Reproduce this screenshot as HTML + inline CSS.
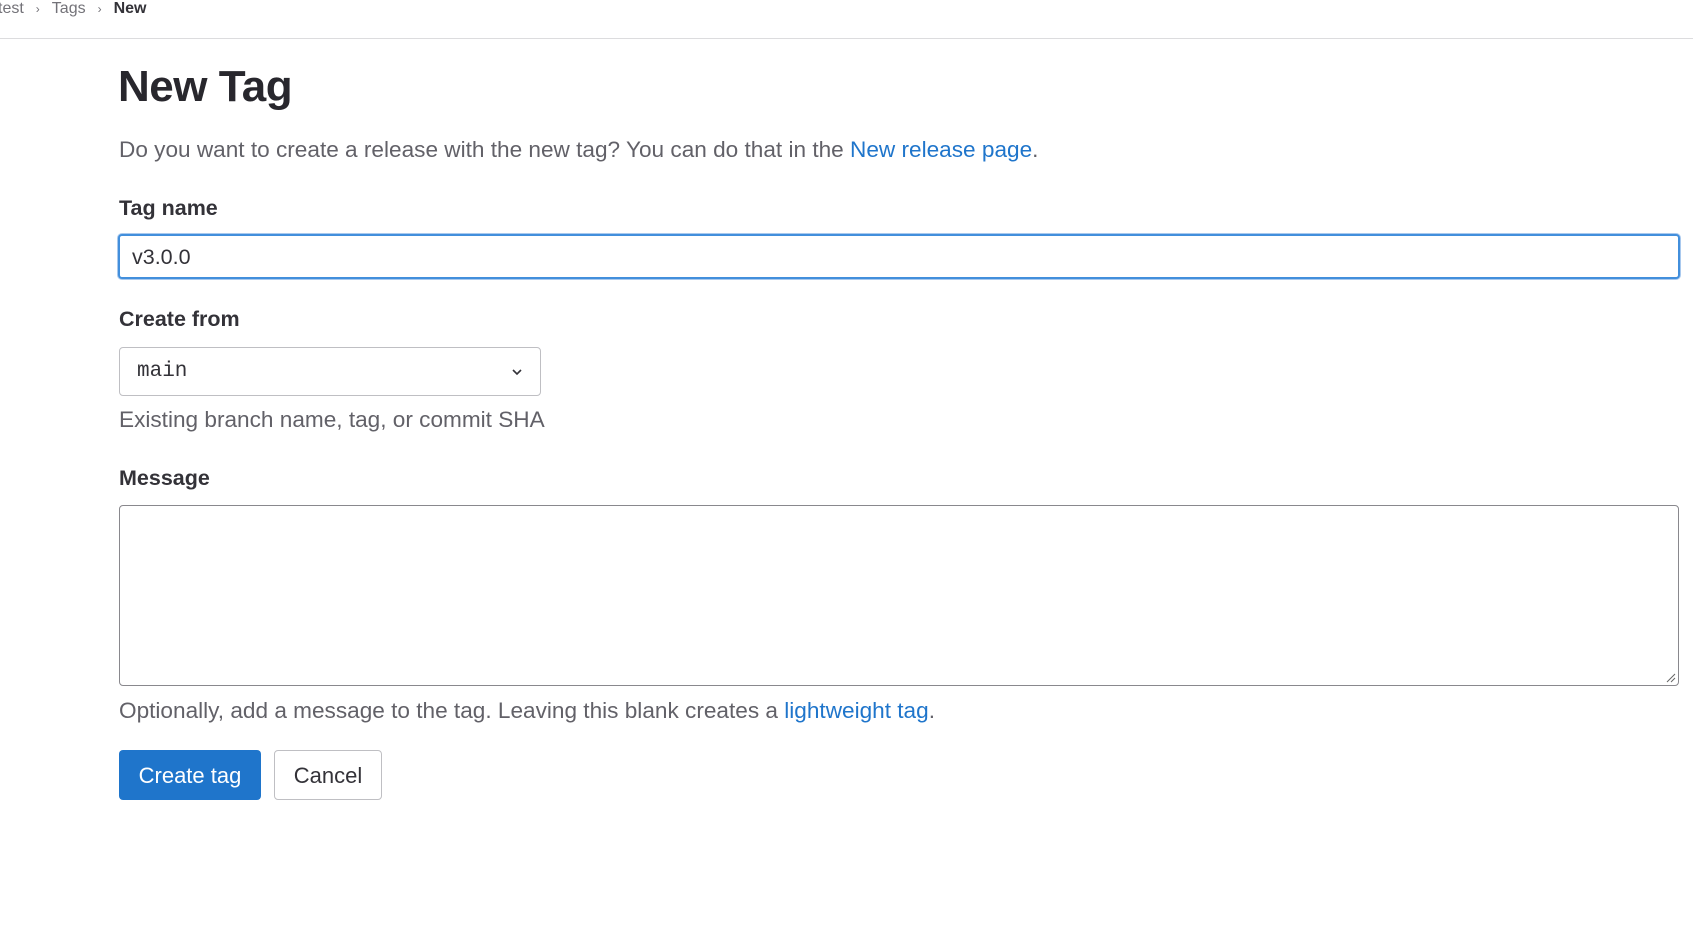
<!DOCTYPE html>
<html><head><style>
*{box-sizing:border-box;margin:0;padding:0}
body{width:1693px;height:942px;background:#fff;font-family:"Liberation Sans",sans-serif;color:#333238;position:relative;overflow:hidden}
.a{position:absolute;white-space:nowrap}
.bc{top:0;left:-2px;font-size:16px;color:#737278;line-height:18px}
.bc b{color:#333238}
.bc span{margin:0 12px;font-size:12px}
.line{position:absolute;left:0;top:38px;width:1693px;height:1px;background:#dcdcde}
h1{position:absolute;left:118px;top:62px;font-size:44px;font-weight:bold;color:#28272d;letter-spacing:-0.5px}
.t{font-size:22.6px;color:#626168;left:119px}
a{color:#1f75cb;text-decoration:none}
.lbl{font-size:21.5px;font-weight:bold;color:#333238;left:119px}
.box{position:absolute;border:1px solid #89888d;border-radius:4px;background:#fff}
.btn{position:absolute;border-radius:4px;font-size:22px;display:flex;align-items:center;justify-content:center}
</style></head><body>
<div class="a bc">test<span>›</span>Tags<span>›</span><b>New</b></div>
<div class="line"></div>
<h1>New Tag</h1>
<div class="a t" style="top:137px">Do you want to create a release with the new tag? You can do that in the <a>New release page</a>.</div>
<div class="a lbl" style="top:196px">Tag name</div>
<div class="box" style="left:118px;top:234px;width:1562px;height:45px;border:2px solid #428fdc;box-shadow:0 0 0 1px #a9c9ee"></div>
<div class="a" style="left:132px;top:245px;font-size:21.5px;color:#333238">v3.0.0</div>
<div class="a lbl" style="top:307px">Create from</div>
<div class="box" style="left:119px;top:347px;width:422px;height:49px;border-color:#bfbfc3"></div>
<div class="a" style="left:137px;top:360px;font-size:21px;font-family:'Liberation Mono',monospace;color:#333238">main</div>
<svg class="a" style="left:510px;top:365px" width="14" height="14" viewBox="0 0 14 14"><path d="M3 5l4 4 4-4" fill="none" stroke="#333238" stroke-width="1.6"/></svg>
<div class="a t" style="top:407px">Existing branch name, tag, or commit SHA</div>
<div class="a lbl" style="top:466px">Message</div>
<div class="box" style="left:119px;top:505px;width:1560px;height:181px"></div>
<svg class="a" style="left:1664px;top:671px" width="12" height="12"><path d="M11 3L3 11M11 7L7 11" stroke="#666" stroke-width="1"/></svg>
<div class="a t" style="top:698px">Optionally, add a message to the tag. Leaving this blank creates a <a>lightweight tag</a>.</div>
<div class="btn" style="left:119px;top:750px;width:142px;height:50px;background:#1f75cb;color:#fff;padding-top:2px">Create tag</div>
<div class="btn" style="left:274px;top:750px;width:108px;height:50px;border:1px solid #bfbfc3;color:#333238;padding-top:2px">Cancel</div>
</body></html>
